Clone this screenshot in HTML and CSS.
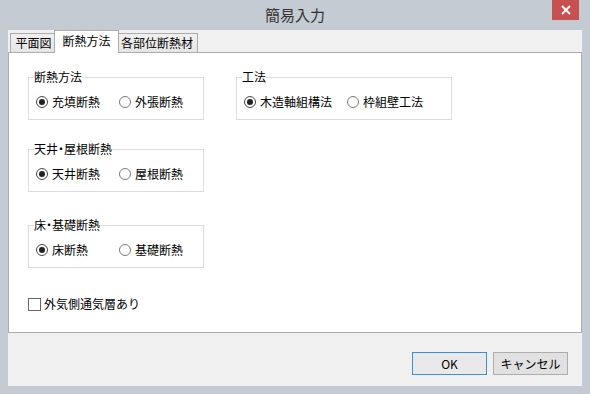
FILE: index.html
```html
<!DOCTYPE html>
<html lang="ja">
<head>
<meta charset="utf-8">
<title>簡易入力</title>
<link rel="stylesheet" href="styles.css">
</head>
<body>
<div class="window">
  <div class="titlebar">
    <div class="title">簡易入力</div>
    <div class="close">
      <svg width="10" height="10" viewBox="0 0 10 10"><path d="M1 1 L9 9 M9 1 L1 9" stroke="#fff" stroke-width="1.8" fill="none"/></svg>
    </div>
  </div>
  <div class="client">
    <div class="tabs">
      <div class="tab t1">平面図</div>
      <div class="tab t2 active">断熱方法</div>
      <div class="tab t3">各部位断熱材</div>
    </div>
    <div class="panel">
      <div class="col">
        <fieldset class="group narrow">
          <legend>断熱方法</legend>
          <div class="row">
            <label class="radio on w83"><span class="ring"></span>充填断熱</label>
            <label class="radio"><span class="ring"></span>外張断熱</label>
          </div>
        </fieldset>
        <fieldset class="group narrow g2">
          <legend class="half">天井・屋根断熱</legend>
          <div class="row">
            <label class="radio on w83"><span class="ring"></span>天井断熱</label>
            <label class="radio"><span class="ring"></span>屋根断熱</label>
          </div>
        </fieldset>
        <fieldset class="group narrow g3">
          <legend class="half">床・基礎断熱</legend>
          <div class="row">
            <label class="radio on w83"><span class="ring"></span>床断熱</label>
            <label class="radio"><span class="ring"></span>基礎断熱</label>
          </div>
        </fieldset>
        <label class="check"><span class="box"></span>外気側通気層あり</label>
      </div>
      <div class="col">
        <fieldset class="group wide">
          <legend>工法</legend>
          <div class="row">
            <label class="radio on w103"><span class="ring"></span>木造軸組構法</label>
            <label class="radio"><span class="ring"></span>枠組壁工法</label>
          </div>
        </fieldset>
      </div>
    </div>
    <div class="footer">
      <button class="btn ok">OK</button>
      <button class="btn">キャンセル</button>
    </div>
  </div>
</div>
</body>
</html>
```
FILE: styles.css
```css
* { box-sizing: border-box; }
body {
  margin: 0;
  background: #c5cbd3;
  font-family: "Noto Sans CJK JP", sans-serif;
  font-size: 12px;
  color: #000;
}
.window {
  width: 590px;
  height: 394px;
  background: #c5cbd3;
  display: flex;
  flex-direction: column;
}
.titlebar {
  height: 30px;
  display: grid;
  grid-template-columns: 1fr auto 1fr;
  padding: 0 11px;
}
.title {
  grid-column: 2;
  font-size: 15px;
  line-height: 30px;
  color: #333;
}
.close {
  grid-column: 3;
  justify-self: end;
  width: 27px;
  height: 20px;
  background: #c75050;
  display: flex;
  align-items: center;
  justify-content: center;
}
.client {
  margin: 0 8px;
  height: 356px;
  background: #f0f0f0;
  display: flex;
  flex-direction: column;
}
.tabs {
  height: 22px;
  display: flex;
  align-items: flex-end;
  padding-left: 2px;
}
.tab {
  height: 19px;
  padding: 0;
  text-align: center;
  border: 1px solid #acacac;
  border-bottom: 0;
  background: linear-gradient(#f0f0f0, #e5e5e5);
  line-height: 18px;
  margin-left: -1px;
  white-space: nowrap;
}
.tab:first-child { margin-left: 0; }
.t1 { width: 47px; }
.t2 { width: 61px; }
.t3 { width: 82px; }
.tab.active {
  width: 65px;
  height: 23px;
  margin: 0 -2px -1px -3px;
  background: #fff;
  line-height: 20px;
  position: relative;
  z-index: 2;
}
.panel {
  height: 281px;
  border: 1px solid #acacac;
  background: #fff;
  display: flex;
  gap: 32px;
  padding: 17px 0 0 19px;
}
.col {
  display: flex;
  flex-direction: column;
  align-items: flex-start;
}
.group {
  margin: 0;
  border: 1px solid #dcdcdc;
  padding: 0 0 0 7px;
  height: 50px;
  min-width: 0;
}
.group.narrow { width: 176px; }
.group.wide { width: 216px; }
.group.g2 { margin-top: 22px; }
.group.g3 { margin-top: 26px; }
.group legend {
  padding: 0;
  margin-left: -2px;
  line-height: 14px;
  font-size: 12px;
}
.group legend.half { font-feature-settings: "halt"; }
.row {
  display: flex;
  align-items: center;
  height: 14px;
  margin-top: 11px;
}
.radio {
  display: inline-flex;
  align-items: center;
  line-height: 14px;
  white-space: nowrap;
}
.w83 { width: 83px; }
.w103 { width: 103px; }
.ring {
  width: 12px;
  height: 12px;
  border-radius: 50%;
  border: 1px solid #7a7a7a;
  background: #fff;
  margin-right: 4px;
  display: flex;
  align-items: center;
  justify-content: center;
}
.radio.on .ring { border-color: #4a4a4a; }
.radio.on .ring::after {
  content: "";
  width: 6px;
  height: 6px;
  border-radius: 50%;
  background: #222;
}
.check {
  margin-top: 29px;
  display: inline-flex;
  align-items: center;
  line-height: 14px;
}
.check .box {
  width: 13px;
  height: 13px;
  border: 1px solid #666;
  background: #fff;
  margin-right: 3px;
}
.footer {
  flex: 1;
  display: flex;
  justify-content: flex-end;
  align-items: flex-start;
  padding: 19px 14px 0 0;
  gap: 6px;
}
.btn {
  width: 75px;
  height: 23px;
  padding: 0;
  font-family: "Noto Sans CJK JP", sans-serif;
  font-size: 12px;
  color: #000;
  border: 1px solid #adadad;
  background: #e1e1e1;
}
.btn.ok {
  border-color: #3c8fdb;
  background: #e9e9e9;
}
```
